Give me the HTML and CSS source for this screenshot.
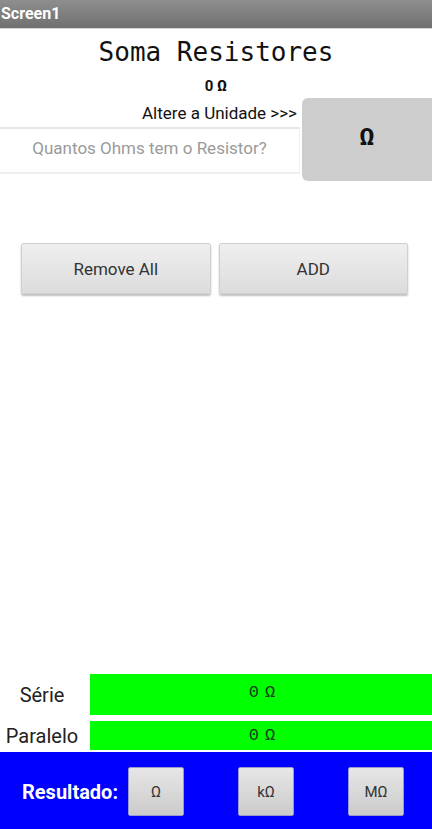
FILE: index.html
```html
<!DOCTYPE html>
<html lang="pt">
<head>
<meta charset="utf-8">
<title>Screen1</title>
<link rel="stylesheet" href="styles.css">
</head>
<body>
<div class="app">
  <div class="titlebar">Screen1</div>
  <main class="main">
    <h1 class="title">Soma Resistores</h1>
    <div class="value">0 Ω</div>
    <div class="unit-row">
      <div class="unit-left">
        <div class="unit-label">Altere a Unidade &gt;&gt;&gt;</div>
        <input class="ohm-input" type="text" placeholder="Quantos Ohms tem o Resistor?">
      </div>
      <button class="unit-btn">Ω</button>
    </div>
    <div class="actions">
      <button class="btn">Remove All</button>
      <button class="btn">ADD</button>
    </div>
  </main>
  <section class="results">
    <div class="res-row serie">
      <div class="res-label">Série</div>
      <div class="res-box">0 Ω</div>
    </div>
    <div class="res-row paralelo">
      <div class="res-label">Paralelo</div>
      <div class="res-box">0 Ω</div>
    </div>
  </section>
  <footer class="footer">
    <span class="footer-label">Resultado:</span>
    <button class="fbtn">Ω</button>
    <button class="fbtn">kΩ</button>
    <button class="fbtn">MΩ</button>
  </footer>
</div>
</body>
</html>
```
FILE: styles.css
```css
* { box-sizing: border-box; }
html, body { margin: 0; padding: 0; }
body {
  font-family: Roboto, "Liberation Sans", sans-serif;
  background: #fff;
  color: #222;
}
.app {
  height: 829px;
  display: flex;
  flex-direction: column;
}
.titlebar {
  height: 29px;
  background: linear-gradient(#8e8e8e, #707070);
  border-bottom: 1px solid #d8d8d8;
  color: #fff;
  font-weight: bold;
  font-size: 16px;
  line-height: 27px;
  padding-left: 1px;
}
.main {
  flex: 1;
  display: flex;
  flex-direction: column;
}
.title {
  margin: 0;
  font-family: "DejaVu Sans Mono", "Liberation Mono", monospace;
  font-weight: normal;
  font-size: 26px;
  line-height: 30px;
  text-align: center;
  padding-top: 8px;
  color: #111;
}
.value {
  text-align: center;
  font-weight: bold;
  font-size: 15px;
  line-height: 18px;
  margin-top: 10px;
  color: #111;
}
.unit-row {
  display: flex;
  margin-top: 3px;
}
.unit-left {
  flex: 1;
  display: flex;
  flex-direction: column;
}
.unit-label {
  height: 29px;
  text-align: right;
  padding-right: 3px;
  font-size: 17px;
  line-height: 30px;
  color: #111;
}
.ohm-input {
  height: 47px;
  width: 100%;
  border: 0;
  border-top: 2px solid #e6e6e6;
  border-bottom: 2px solid #efefef;
  border-right: 1px solid #f2f2f2;
  font-family: Roboto, sans-serif;
  font-size: 17px;
  text-align: center;
  padding: 0 0 6px;
  outline: none;
  background: #fff;
}
.ohm-input::placeholder { color: #9a9a9a; }
.unit-btn {
  width: 130px;
  height: 83px;
  border: 0;
  border-radius: 6px 0 0 6px;
  background: #cdcdcd;
  font-family: Roboto, sans-serif;
  font-weight: bold;
  font-size: 23px;
  color: #111;
  padding: 0 0 4px;
  margin-left: 2px;
}
.actions {
  display: flex;
  gap: 8px;
  padding: 0 24px 0 21px;
  margin-top: 62px;
}
.btn {
  flex: 1;
  height: 51px;
  border: 1px solid #d0d0d0;
  border-radius: 2px;
  background: linear-gradient(#efefef, #dcdcdc);
  box-shadow: 0 2px 2px rgba(0,0,0,0.25);
  font-family: Roboto, sans-serif;
  font-size: 17px;
  color: #333;
}
.results {
  display: flex;
  flex-direction: column;
  gap: 6px;
  padding-bottom: 2px;
}
.res-row {
  display: flex;
  align-items: center;
}
.res-label {
  width: 90px;
  padding-right: 6px;
  text-align: center;
  font-size: 20px;
  color: #222;
}
.res-box {
  flex: 1;
  background: #00ff00;
  display: flex;
  align-items: center;
  justify-content: center;
  font-family: "Liberation Mono", monospace;
  font-size: 17px;
  letter-spacing: -2px;
  color: #1a3a1a;
}
.serie .res-box { height: 41px; padding-bottom: 4px; }
.paralelo .res-box { height: 29px; }
.footer {
  height: 77px;
  background: #0000ff;
  display: flex;
  align-items: center;
  padding-left: 22px;
  padding-top: 2px;
}
.footer-label {
  flex: none;
  color: #fff;
  font-weight: bold;
  font-size: 20px;
  width: 106px;
}
.fbtn {
  flex: none;
  width: 56px;
  height: 49px;
  margin-right: 54px;
  border: 1px solid #9a9ac8;
  border-radius: 2px;
  background: linear-gradient(#e6e6e6, #cbcbcb);
  font-family: Roboto, sans-serif;
  font-size: 15px;
  color: #333;
  padding: 0;
}
```
